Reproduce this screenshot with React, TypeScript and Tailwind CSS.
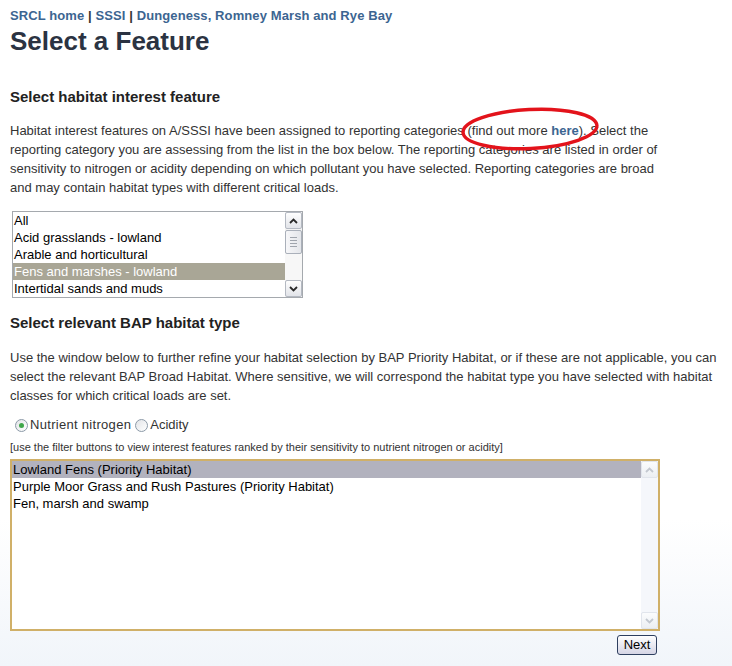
import React from 'react'

const habitatFeatures = [
    'All',
    'Acid grasslands - lowland',
    'Arable and horticultural',
    'Fens and marshes - lowland',
    'Intertidal sands and muds',
]

const bapTypes = [
    'Lowland Fens (Priority Habitat)',
    'Purple Moor Grass and Rush Pastures (Priority Habitat)',
    'Fen, marsh and swamp',
]

const Arrow = ({ up, color }: { up?: boolean; color: string }) => (
    <svg width="9" height="6" viewBox="0 0 9 6">
        <path
            d={up ? 'M1 5 L4.5 1.5 L8 5' : 'M1 1 L4.5 4.5 L8 1'}
            fill="none"
            stroke={color}
            strokeWidth="1.8"
        />
    </svg>
)

const ScrollButton = ({ up, disabled }: { up?: boolean; disabled?: boolean }) => (
    <div
        className={
            disabled
                ? 'h-[17px] w-[17px] flex items-center justify-center rounded-[2px] border border-[#e1e5ec] bg-linear-to-b from-[#fbfcfd] to-[#eceff3]'
                : 'h-[17px] w-[17px] flex items-center justify-center rounded-[2px] border border-[#b4b9c2] bg-linear-to-b from-[#fefefe] to-[#e2e4e9]'
        }
    >
        <Arrow up={up} color={disabled ? '#c3c8d0' : '#2a2a2a'} />
    </div>
)

const Radio = ({ checked }: { checked?: boolean }) => (
    <div className="h-[13px] w-[13px] rounded-full border border-[#8c9aa8] bg-linear-to-br from-[#e2e4e7] to-white flex items-center justify-center">
        {checked && <div className="h-[5px] w-[5px] rounded-full bg-[#3fa64a]" />}
    </div>
)

export default function App() {
    return (
        <div className="min-h-[666px] bg-linear-to-b from-white from-[78%] to-[#f1f5fa] pl-[10px] pt-[8px] font-['Liberation_Sans',Arial,sans-serif] text-[#333]">
            {/* breadcrumb */}
            <div className="h-[16px] text-[13px] leading-[16px] font-bold tracking-[0.1px] whitespace-nowrap">
                <a className="text-[#3c6591]">SRCL home</a>
                <span className="text-[#333]"> | </span>
                <a className="text-[#3c6591]">SSSI</a>
                <span className="text-[#333]"> | </span>
                <a className="text-[#3c6591]">Dungeness, Romney Marsh and Rye Bay</a>
            </div>
            <h1 className="mt-[2px] text-[26px] leading-[30px] font-bold text-[#2b3342]">
                Select a Feature
            </h1>

            <h2 className="mt-[32px] text-[15px] leading-[18px] font-bold text-[#222]">
                Select habitat interest feature
            </h2>
            <div className="relative mt-[15px] text-[13px] leading-[19px] whitespace-nowrap">
                <p>
                    Habitat interest features on A/SSSI have been assigned to reporting categories (find out more{' '}
                    <a className="font-bold text-[#3c6591]">here</a>). Select the
                    <br />
                    reporting category you are assessing from the list in the box below. The reporting categories are listed in order of
                    <br />
                    sensitivity to nitrogen or acidity depending on which pollutant you have selected. Reporting categories are broad
                    <br />
                    and may contain habitat types with different critical loads.
                </p>
                <svg
                    className="absolute left-[448px] top-[-16px] pointer-events-none"
                    width="144"
                    height="48"
                    viewBox="0 0 144 48"
                >
                    <ellipse
                        cx="72"
                        cy="24"
                        rx="67"
                        ry="19.5"
                        transform="rotate(-3 72 24)"
                        fill="none"
                        stroke="#e3131b"
                        strokeWidth="3.4"
                    />
                </svg>
            </div>

            {/* reporting category list */}
            <div className="mt-[14px] ml-[2px] flex h-[87px] w-[291px] border border-[#a5a9ae] bg-white text-[13px] leading-[17px] text-black">
                <div className="flex-1">
                    {habitatFeatures.map((f, i) => (
                        <div
                            key={f}
                            className={
                                i === 3
                                    ? 'h-[17px] pl-[1px] whitespace-nowrap bg-[#a9a696] text-white'
                                    : 'h-[17px] pl-[1px] whitespace-nowrap'
                            }
                        >
                            {f}
                        </div>
                    ))}
                </div>
                <div className="flex w-[17px] flex-col bg-[#f3f3f3]">
                    <ScrollButton up />
                    <div className="mt-[1px] h-[24px] w-[17px] rounded-[2px] border border-[#aab0ba] bg-linear-to-r from-[#f7f7f9] to-[#e4e6ea] flex flex-col items-center justify-center gap-[2px]">
                        <div className="h-px w-[7px] bg-[#a0a5ad]" />
                        <div className="h-px w-[7px] bg-[#a0a5ad]" />
                        <div className="h-px w-[7px] bg-[#a0a5ad]" />
                        <div className="h-px w-[7px] bg-[#a0a5ad]" />
                    </div>
                    <div className="flex-1 bg-[#f7f7f7]" />
                    <ScrollButton />
                </div>
            </div>

            <h2 className="mt-[16px] text-[15px] leading-[18px] font-bold text-[#222]">
                Select relevant BAP habitat type
            </h2>
            <p className="mt-[16px] text-[13px] leading-[19px] whitespace-nowrap">
                Use the window below to further refine your habitat selection by BAP Priority Habitat, or if these are not applicable, you can
                <br />
                select the relevant BAP Broad Habitat. Where sensitive, we will correspond the habitat type you have selected with habitat
                <br />
                classes for which critical loads are set.
            </p>

            {/* pollutant filter */}
            <div className="mt-[11px] flex h-[18px] items-center text-[13px] leading-[18px]">
                <div className="ml-[5px]">
                    <Radio checked />
                </div>
                <span className="ml-[2px] tracking-[0.3px]">Nutrient nitrogen</span>
                <div className="ml-[4px]">
                    <Radio />
                </div>
                <span className="ml-[2px]">Acidity</span>
            </div>
            <div className="mt-[6px] h-[14px] text-[11px] leading-[14px] whitespace-nowrap">
                [use the filter buttons to view interest features ranked by their sensitivity to nutrient nitrogen or acidity]
            </div>

            {/* BAP habitat list */}
            <div className="mt-[5px] flex h-[172px] w-[650px] border-2 border-[#d0b068] bg-white text-[13px] leading-[17px] text-black">
                <div className="flex-1">
                    {bapTypes.map((b, i) => (
                        <div
                            key={b}
                            className={
                                i === 0
                                    ? 'h-[17px] pl-[1px] whitespace-nowrap bg-[#b2b2be]'
                                    : 'h-[17px] pl-[1px] whitespace-nowrap'
                            }
                        >
                            {b}
                        </div>
                    ))}
                </div>
                <div className="flex w-[17px] flex-col justify-between bg-[#f5f7fb]">
                    <ScrollButton up disabled />
                    <ScrollButton disabled />
                </div>
            </div>
            <div className="mt-[4px] flex w-[650px] justify-end pr-[3px]">
                <button className="h-[20px] w-[40px] rounded-[3px] border border-[#2e3f5f] bg-linear-to-b from-white to-[#d5d5e5] text-[13px] leading-[18px] text-black">
                    Next
                </button>
            </div>
        </div>
    )
}
